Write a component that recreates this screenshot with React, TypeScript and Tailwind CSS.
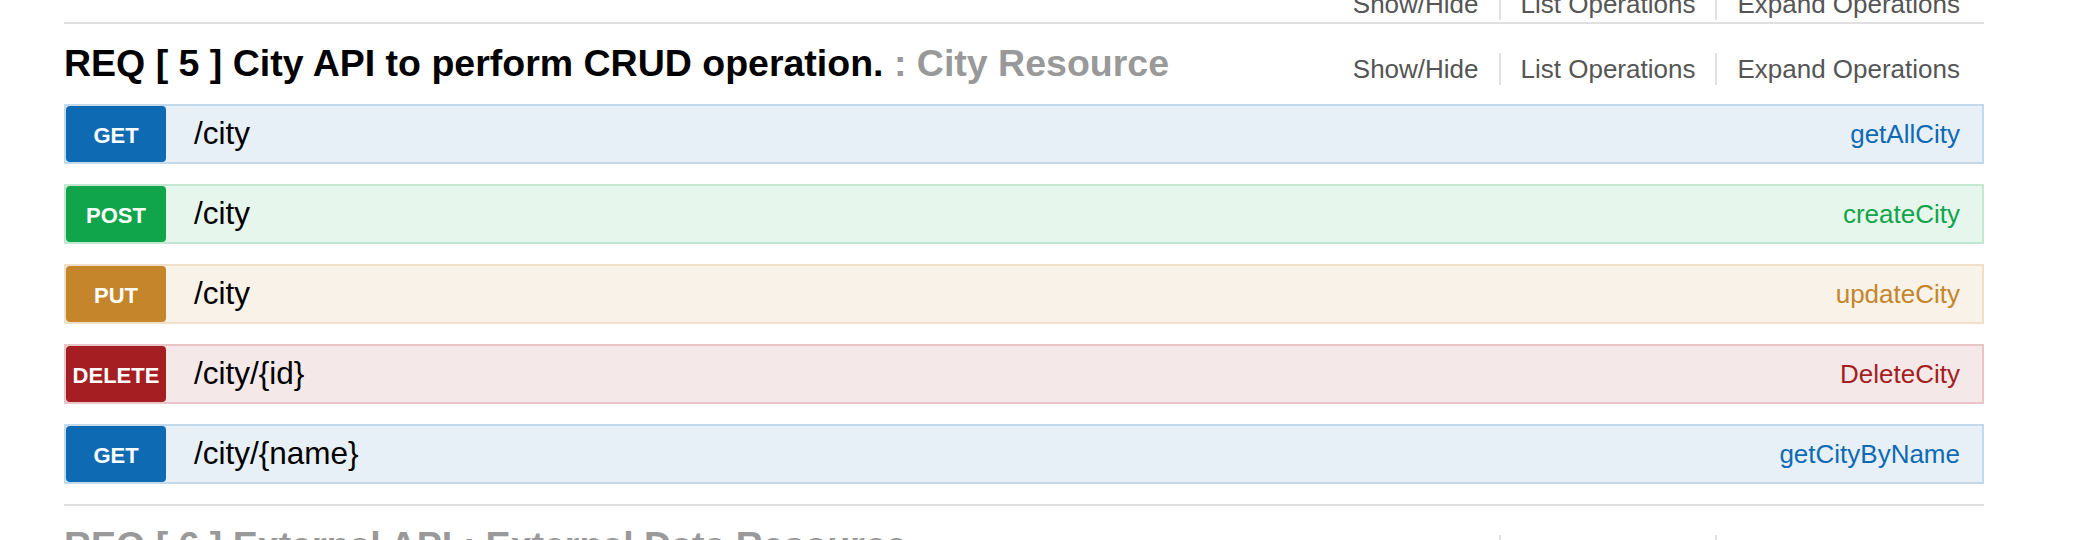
import React from 'react';

type Method = 'GET' | 'POST' | 'PUT' | 'DELETE';

const METHOD_STYLES: Record<Method, { row: string; badge: string; text: string }> = {
  GET:    { row: 'bg-[#e7f0f7] border-[#c3d9ec]', badge: 'bg-[#0f6ab4]', text: 'text-[#0f6ab4]' },
  POST:   { row: 'bg-[#e7f6ec] border-[#c3e8d1]', badge: 'bg-[#10a54a]', text: 'text-[#10a54a]' },
  PUT:    { row: 'bg-[#f9f2e9] border-[#f0e0ca]', badge: 'bg-[#c5862b]', text: 'text-[#c5862b]' },
  DELETE: { row: 'bg-[#f5e8e8] border-[#e8c6c7]', badge: 'bg-[#a41e22]', text: 'text-[#a41e22]' },
};

const OPERATIONS: { method: Method; path: string; name: string }[] = [
  { method: 'GET',    path: '/city',        name: 'getAllCity' },
  { method: 'POST',   path: '/city',        name: 'createCity' },
  { method: 'PUT',    path: '/city',        name: 'updateCity' },
  { method: 'DELETE', path: '/city/{id}',   name: 'DeleteCity' },
  { method: 'GET',    path: '/city/{name}', name: 'getCityByName' },
];

const OPTIONS = ['Show/Hide', 'List Operations', 'Expand Operations'];

function Options({ className = '' }: { className?: string }) {
  return (
    <ul className={`flex mr-[4px] text-[26px] leading-[32px] text-[#555] ${className}`}>
      {OPTIONS.map((label, i) => (
        <li
          key={label}
          className={`h-[32px] px-[20px] whitespace-nowrap ${i < OPTIONS.length - 1 ? 'border-r-2 border-[#e2e2e2]' : ''}`}
        >
          {label}
        </li>
      ))}
    </ul>
  );
}

function Operation({ method, path, name }: { method: Method; path: string; name: string }) {
  const s = METHOD_STYLES[method];
  return (
    <div className={`flex items-center h-[60px] border-2 ${s.row}`}>
      <div
        className={`flex items-center justify-center w-[100px] h-full pt-[3px] rounded-[4px] text-white text-[22px] leading-[24px] font-bold ${s.badge}`}
      >
        {method}
      </div>
      <div className="flex-1 pl-[28px] text-[31.5px] text-black">{path}</div>
      <div className={`pr-[22px] text-[26px] ${s.text}`}>{name}</div>
    </div>
  );
}

export default function App() {
  return (
    <div className="w-[2084px] h-[540px] overflow-hidden bg-white font-['Liberation_Sans',Arial,sans-serif]">
      <div className="ml-[64px] w-[1920px]">
        {/* previous resource, scrolled mostly out of view */}
        <div className="flex items-end justify-end h-[24px] border-b-2 border-[#e0e0e0]">
          <Options className="mb-[2px]" />
        </div>

        {/* current resource */}
        <div className="border-b-2 border-[#e0e0e0]">
          <div className="flex justify-between pt-[17px]">
            <h2 className="text-[37.5px] leading-[44px] font-bold text-black whitespace-nowrap">
              REQ [ 5 ] City API to perform CRUD operation. <span className="text-[#999]">: City Resource</span>
            </h2>
            <Options className="mt-[12px]" />
          </div>
          <div className="flex flex-col gap-[20px] pt-[19px] pb-[20px]">
            {OPERATIONS.map((op, i) => (
              <Operation key={i} {...op} />
            ))}
          </div>
        </div>

        {/* next resource */}
        <div className="flex justify-between pt-[17px]">
          <h2 className="text-[37.5px] leading-[44px] font-bold text-[#999] whitespace-nowrap">
            REQ [ 6 ] External API : External Data Resource
          </h2>
          <Options className="mt-[12px]" />
        </div>
      </div>
    </div>
  );
}
